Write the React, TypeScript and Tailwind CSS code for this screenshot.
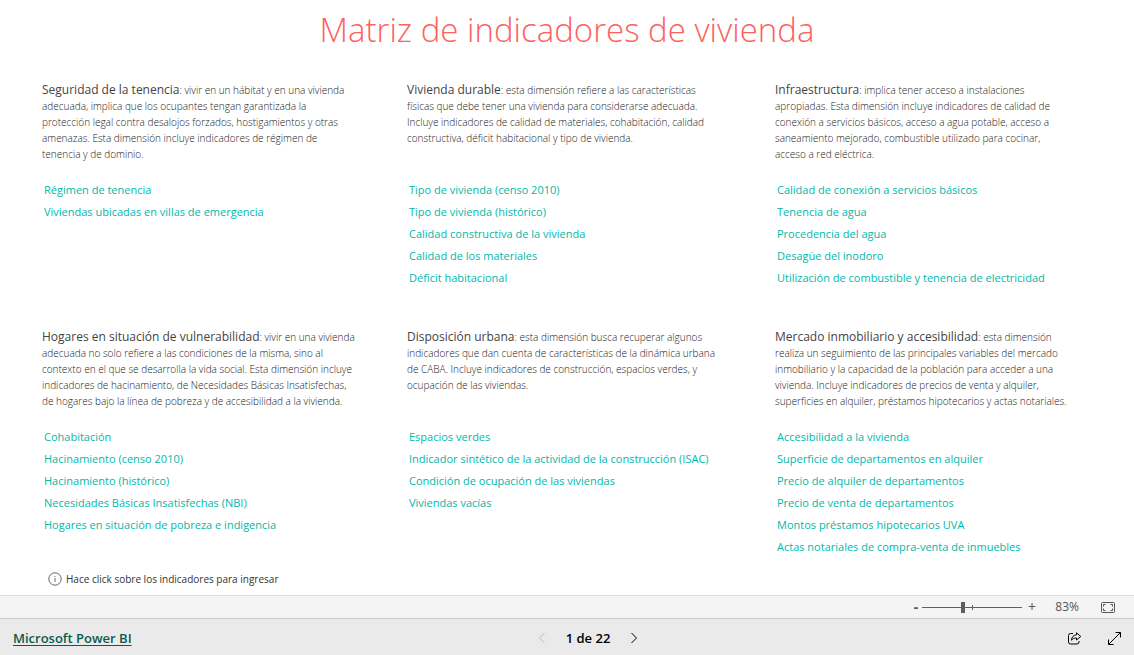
import { useState } from "react";

const SECTIONS = [
  {
    title: "Seguridad de la tenencia",
    intro: "vivir en un hábitat y en una vivienda",
    text: `adecuada, implica que los ocupantes tengan garantizada la
protección legal contra desalojos forzados, hostigamientos y otras
amenazas. Esta dimensión incluye indicadores de régimen de
tenencia y de dominio.`,
    links: ["Régimen de tenencia", "Viviendas ubicadas en villas de emergencia"],
  },
  {
    title: "Vivienda durable",
    intro: "esta dimensión refiere a las características",
    text: `físicas que debe tener una vivienda para considerarse adecuada.
Incluye indicadores de calidad de materiales, cohabitación, calidad
constructiva, déficit habitacional y tipo de vivienda.`,
    links: [
      "Tipo de vivienda (censo 2010)",
      "Tipo de vivienda (histórico)",
      "Calidad constructiva de la vivienda",
      "Calidad de los materiales",
      "Déficit habitacional",
    ],
  },
  {
    title: "Infraestructura",
    intro: "implica tener acceso a instalaciones",
    text: `apropiadas. Esta dimensión incluye indicadores de calidad de
conexión a servicios básicos, acceso a agua potable, acceso a
saneamiento mejorado, combustible utilizado para cocinar,
acceso a red eléctrica.`,
    links: [
      "Calidad de conexión a servicios básicos",
      "Tenencia de agua",
      "Procedencia del agua",
      "Desagüe del inodoro",
      "Utilización de combustible y tenencia de electricidad",
    ],
  },
  {
    title: "Hogares en situación de vulnerabilidad",
    intro: "vivir en una vivienda",
    text: `adecuada no solo refiere a las condiciones de la misma, sino al
contexto en el que se desarrolla la vida social. Esta dimensión incluye
indicadores de hacinamiento, de Necesidades Básicas Insatisfechas,
de hogares bajo la línea de pobreza y de accesibilidad a la vivienda.`,
    links: [
      "Cohabitación",
      "Hacinamiento (censo 2010)",
      "Hacinamiento (histórico)",
      "Necesidades Básicas Insatisfechas (NBI)",
      "Hogares en situación de pobreza e indigencia",
    ],
  },
  {
    title: "Disposición urbana",
    intro: "esta dimensión busca recuperar algunos",
    text: `indicadores que dan cuenta de características de la dinámica urbana
de CABA. Incluye indicadores de construcción, espacios verdes, y
ocupación de las viviendas.`,
    links: [
      "Espacios verdes",
      "Indicador sintético de la actividad de la construcción (ISAC)",
      "Condición de ocupación de las viviendas",
      "Viviendas vacías",
    ],
  },
  {
    title: "Mercado inmobiliario y accesibilidad",
    intro: "esta dimensión",
    text: `realiza un seguimiento de las principales variables del mercado
inmobiliario y la capacidad de la población para acceder a una
vivienda. Incluye indicadores de precios de venta y alquiler,
superficies en alquiler, préstamos hipotecarios y actas notariales.`,
    links: [
      "Accesibilidad a la vivienda",
      "Superficie de departamentos en alquiler",
      "Precio de alquiler de departamentos",
      "Precio de venta de departamentos",
      "Montos préstamos hipotecarios UVA",
      "Actas notariales de compra-venta de inmuebles",
    ],
  },
];

type Section = (typeof SECTIONS)[number];

function Indicator({ title, intro, text, links }: Section) {
  return (
    <section>
      <div className="min-h-[81px] text-[10px] leading-4 font-light whitespace-pre text-[#222]">
        <div className="flex items-baseline">
          <h2 className="text-xs leading-4 font-normal text-[#444]">{title}</h2>
          <p>: {intro}</p>
        </div>
        <p>{text}</p>
      </div>
      <ul className="mt-4 pl-0.5 text-[11px] leading-[22px] text-[#01b8aa]">
        {links.map((l) => (
          <li key={l}>
            <a href="#" className="whitespace-nowrap">
              {l}
            </a>
          </li>
        ))}
      </ul>
    </section>
  );
}

function ZoomBar() {
  const [zoom, setZoom] = useState(83);

  return (
    <div className="flex h-[23px] items-center justify-end border-t border-[#dedede] bg-[#f4f4f4] pr-[19px] text-[#555]">
      <button aria-label="Alejar" className="w-3 text-sm leading-4 font-bold">
        -
      </button>
      <div className="relative flex h-4 w-[100px] items-center">
        <input
          type="range"
          aria-label="Zoom"
          min={10}
          max={190}
          value={zoom}
          onChange={(e) => setZoom(Number(e.target.value))}
          className="h-4 w-full appearance-none bg-transparent [&::-webkit-slider-runnable-track]:h-px [&::-webkit-slider-runnable-track]:bg-[#605e5c] [&::-webkit-slider-thumb]:-mt-[5px] [&::-webkit-slider-thumb]:h-[11px] [&::-webkit-slider-thumb]:w-1 [&::-webkit-slider-thumb]:appearance-none [&::-webkit-slider-thumb]:bg-[#605e5c]"
        />
        <span className="pointer-events-none absolute left-1/2 h-[5px] w-px bg-[#605e5c]" />
      </div>
      <button aria-label="Acercar" className="w-5 text-sm leading-4">
        +
      </button>
      <span className="w-[37px] text-right text-xs leading-4">{zoom}%</span>
      <button aria-label="Ajustar a la página" className="ml-[22px]">
        <svg width="14" height="11" viewBox="0 0 14 11" fill="none" stroke="currentColor">
          <rect x="0.5" y="0.5" width="13" height="10" rx="1" />
          <path d="M2.5 4.5v-2h2M9.5 2.5h2v2M11.5 6.5v2h-2M4.5 8.5h-2v-2" />
        </svg>
      </button>
    </div>
  );
}

function Footer() {
  return (
    <footer className="grid h-[37px] grid-cols-3 items-center border-t border-[#c8c8c8] bg-[#eaeaea] px-[13px] pt-0.5 text-[13px] leading-5 font-semibold text-black">
      <a href="#" className="justify-self-start text-[#0b5a50] underline underline-offset-2">
        Microsoft Power BI
      </a>
      <div className="flex items-center justify-center gap-5 pl-[42px]">
        <button aria-label="Página anterior" disabled className="text-[#bdbdbd]">
          <svg width="8" height="12" viewBox="0 0 8 12" fill="none" stroke="currentColor">
            <path d="M6.5 1 1.5 6l5 5" />
          </svg>
        </button>
        <span>1 de 22</span>
        <button aria-label="Página siguiente">
          <svg width="8" height="12" viewBox="0 0 8 12" fill="none" stroke="currentColor">
            <path d="m1.5 1 5 5-5 5" />
          </svg>
        </button>
      </div>
      <div className="flex items-center justify-end gap-[26px]">
        <button aria-label="Compartir">
          <svg width="14" height="13" viewBox="0 0 14 13" fill="none" stroke="currentColor" strokeLinejoin="round">
            <path d="M5 1.5H2.5a2 2 0 0 0-2 2v6.5a2 2 0 0 0 2 2H9a2 2 0 0 0 2-2V9" />
            <path d="M8.5.8 12.8 4.5 8.5 8V6C6 6 4.5 6.7 3.5 8.3 3.5 5.2 5.5 3 8.5 2.8z" />
          </svg>
        </button>
        <button aria-label="Pantalla completa">
          <svg width="13" height="13" viewBox="0 0 13 13" fill="none" stroke="currentColor">
            <path d="M7.5.5h5v5M12.5.5l-12 12M.5 7.5v5h5" />
          </svg>
        </button>
      </div>
    </footer>
  );
}

export default function App() {
  return (
    <div className="flex min-h-screen flex-col bg-white font-['Open_Sans','Noto_Sans',sans-serif]">
      <main className="flex flex-1 flex-col">
        <h1 className="pt-2 text-center text-[33px] leading-11 font-light text-[#fd625e]">
          Matriz de indicadores de vivienda
        </h1>
        <div className="mt-[30px] grid grid-cols-[365fr_368fr_359fr] gap-y-10 pl-[42px]">
          {SECTIONS.map((s) => (
            <Indicator key={s.title} {...s} />
          ))}
        </div>
        <p className="mt-auto flex items-center gap-1 pb-2 pl-12 text-[10px] leading-4 text-[#333]">
          <svg width="14" height="14" viewBox="0 0 14 14" fill="none" stroke="#666">
            <circle cx="7" cy="7" r="6.2" />
            <path d="M7 6v4M7 4v1" />
          </svg>
          Hace click sobre los indicadores para ingresar
        </p>
      </main>
      <ZoomBar />
      <Footer />
    </div>
  );
}
